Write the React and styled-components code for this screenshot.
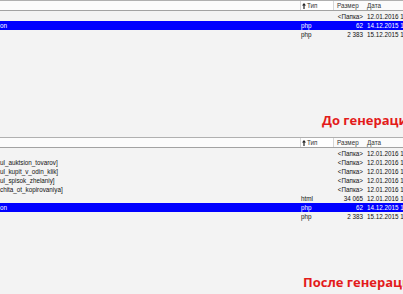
import React from "react";
import styled, { createGlobalStyle, css } from "styled-components";

const GlobalStyle = createGlobalStyle`
  html, body {
    margin: 0;
    padding: 0;
    width: 403px;
    height: 294px;
    overflow: hidden;
    background: #f3f3f3;
  }
  #root { width: 403px; }
`;

const Page = styled.div`
  display: flex;
  flex-direction: column;
  width: 403px;
  font-family: "Liberation Sans", Arial, sans-serif;
`;

const Panel = styled.section`
  display: flex;
  flex-direction: column;
  margin-top: ${(p) => p.$top}px;
`;

const cols = css`
  display: grid;
  grid-template-columns: 300px 34px 30px 1fr;
`;

const Header = styled.div`
  ${cols};
  height: 9px;
  background: #fbfbfb;
  border-top: 1px solid #b0b0b0;
  border-bottom: 1px solid #a2a2a2;
  font-size: 6.3px;
  line-height: 9px;
  color: #333;
`;

const HeadCell = styled.div`
  display: flex;
  align-items: center;
  gap: 1px;
  padding-left: ${(p) => p.$pad || 0}px;
  white-space: nowrap;
  overflow: hidden;
  ${(p) =>
    p.$sorted &&
    css`
      background: #ffffff;
      border-left: 1px solid #d6d6d6;
      border-right: 1px solid #d6d6d6;
      box-sizing: border-box;
    `}
`;

const List = styled.div`
  display: flex;
  flex-direction: column;
  padding-top: 1px;
`;

const Row = styled.div`
  ${cols};
  height: 9px;
  font-size: 6.3px;
  line-height: 9px;
  color: ${(p) => (p.$selected ? "#ffffff" : "#111")};
  background: ${(p) => (p.$selected ? "#0000ff" : "transparent")};
`;

const Cell = styled.div`
  white-space: nowrap;
  overflow: hidden;
  text-align: ${(p) => (p.$right ? "right" : "left")};
  padding-left: ${(p) => p.$pl || 0}px;
  padding-right: ${(p) => p.$pr || 0}px;
`;

const Caption = styled.div`
  margin-top: ${(p) => p.$top}px;
  padding-left: ${(p) => p.$indent}px;
  font-family: "Open Sans", "Noto Sans", sans-serif;
  font-weight: 700;
  font-size: 13px;
  line-height: 18px;
  color: #e31b1b;
  white-space: nowrap;
`;

const Arrow = () => (
  <svg width="4" height="6" viewBox="0 0 4 6">
    <path d="M2 0 L4 2.5 L2.6 2.5 L2.6 6 L1.4 6 L1.4 2.5 L0 2.5 Z" fill="#222" />
  </svg>
);

function FilePanel({ top, rows }) {
  return (
    <Panel $top={top}>
      <Header>
        <HeadCell />
        <HeadCell $sorted $pad={1}>
          <Arrow />
          <span>Тип</span>
        </HeadCell>
        <HeadCell $pad={3}>Размер</HeadCell>
        <HeadCell $pad={3}>Дата</HeadCell>
      </Header>
      <List>
        {rows.map((r, i) => (
          <Row key={i} $selected={r.selected}>
            <Cell>{r.name}</Cell>
            <Cell $pl={1}>{r.type}</Cell>
            <Cell $right $pr={1}>{r.size}</Cell>
            <Cell $pl={3}>{r.date}</Cell>
          </Row>
        ))}
      </List>
    </Panel>
  );
}

const FOLDER = "<Папка>";

const before = [
  { name: "", type: "", size: FOLDER, date: "12.01.2016 15:32" },
  { name: "on", type: "php", size: "62", date: "14.12.2015 12:04", selected: true },
  { name: "", type: "php", size: "2 383", date: "15.12.2015 10:21" },
];

const after = [
  { name: "", type: "", size: FOLDER, date: "12.01.2016 15:32" },
  { name: "ul_auktsion_tovarov]", type: "", size: FOLDER, date: "12.01.2016 15:32" },
  { name: "ul_kupit_v_odin_klik]", type: "", size: FOLDER, date: "12.01.2016 15:32" },
  { name: "ul_spisok_zhelaniy]", type: "", size: FOLDER, date: "12.01.2016 15:32" },
  { name: "chita_ot_kopirovaniya]", type: "", size: FOLDER, date: "12.01.2016 15:32" },
  { name: "", type: "html", size: "34 065", date: "12.01.2016 15:32" },
  { name: "on", type: "php", size: "62", date: "14.12.2015 12:04", selected: true },
  { name: "", type: "php", size: "2 383", date: "15.12.2015 10:21" },
];

export default function App() {
  return (
    <>
      <GlobalStyle />
      <Page>
        <FilePanel top={0} rows={before} />
        <Caption $top={72} $indent={322}>До генерации</Caption>
        <FilePanel top={8} rows={after} />
        <Caption $top={52} $indent={303}>После генерации</Caption>
      </Page>
    </>
  );
}
